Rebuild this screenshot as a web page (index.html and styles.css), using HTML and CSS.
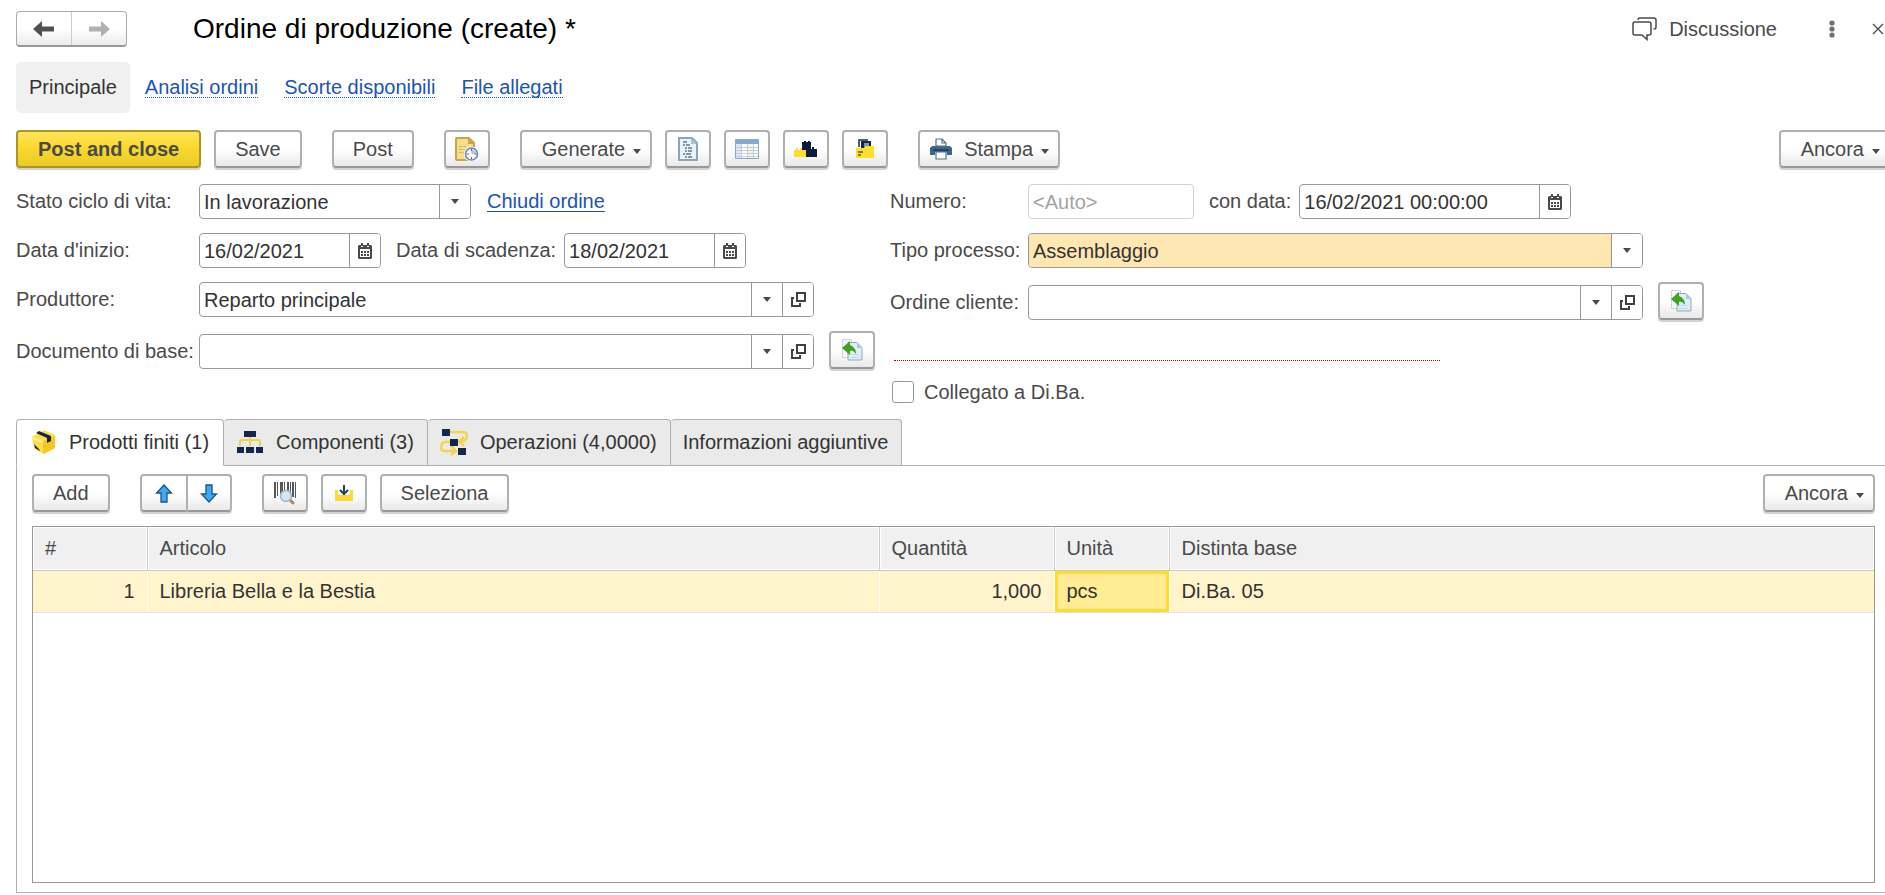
FILE: index.html
```html
<!DOCTYPE html>
<html lang="it">
<head>
<meta charset="utf-8">
<title>Ordine di produzione (create) *</title>
<link rel="stylesheet" href="styles.css">
</head>
<body>
<svg class="sprite" aria-hidden="true">
  <symbol id="calendar" viewBox="0 0 14 16"><path fill="#4a4a4a" fill-rule="evenodd" d="M1 2h2v2h2V2h4v2h2V2h2l1 1v12l-1 1H1l-1-1V3zM2 6v8h10V6z"/><path fill="#4a4a4a" d="M3 0h2v3H3zM9 0h2v3H9zM3 8h2v2H3zM6 8h2v2H6zM9 8h2v2H9zM3 11h2v2H3zM6 11h2v2H6zM9 11h2v2H9z"/></symbol>
  <symbol id="open" viewBox="0 0 15 15"><path fill="none" stroke="#404040" stroke-width="2" d="M6 1h8v8H6zM3 6H1v8h8v-3"/></symbol>
  <symbol id="caret" viewBox="0 0 8 5"><path fill="#4a4a4a" d="M0 0h8L4 5z"/></symbol>
  <symbol id="fill" viewBox="0 0 22 22"><path fill="#f5f7f8" stroke="#b9c3c9" stroke-dasharray="2 1" d="M1.500.5h9v18h-9z"/><path fill="#dfedf7" stroke="#8faabd" d="M7 3.500h9l5 5V21H7z"/><path fill="#a9cbe0" d="M16 3.500V9h5z"/><path fill="#c5dbea" d="M9 15h9v1H9zM9 18h9v1H9z"/><path fill="#41a31d" d="M1 9l8-7v4c4 2 6 4 6 9-2-3-4-4-6-3v4z"/></symbol>
</svg>
<div class="page">
  <header class="header">
    <div class="history">
      <button type="button" aria-label="Indietro"><svg width="22" height="16" viewBox="0 0 22 16"><path fill="#505050" d="M0 8l9-8v5.500h12v5H9V16z"/></svg></button>
      <button type="button" aria-label="Avanti"><svg width="22" height="16" viewBox="0 0 22 16"><path fill="#b0b0b0" d="M22 8l-9-8v5.500H1v5h12V16z"/></svg></button>
    </div>
    <h1>Ordine di produzione (create) *</h1>
    <button type="button" class="plain discuss"><svg width="25" height="24" viewBox="0 0 25 24"><g fill="none" stroke="#4a4a4a" stroke-width="1.500"><path d="M6 3V2.500Q6 1 7.500 1H22q2 0 2 2v7q0 2-2 2h-.5"/><path d="M3 5h14q2 0 2 2v9q0 2-2 2h-2v4.500L10 18H3q-2 0-2-2V7q0-2 2-2z"/></g></svg>Discussione</button>
    <button type="button" class="plain more" aria-label="Altro"><svg width="6" height="18" viewBox="0 0 6 18"><g fill="#707070"><circle cx="3" cy="3" r="2.600"/><circle cx="3" cy="9" r="2.600"/><circle cx="3" cy="15" r="2.600"/></g></svg></button>
    <button type="button" class="plain close" aria-label="Chiudi"><svg width="12" height="12" viewBox="0 0 12 12"><path fill="none" stroke="#4a4a4a" stroke-width="1.300" d="M1 1l10 10M11 1L1 11"/></svg></button>
  </header>

  <nav class="sections">
    <span class="current">Principale</span>
    <a href="#">Analisi ordini</a>
    <a href="#">Scorte disponibili</a>
    <a href="#">File allegati</a>
  </nav>

  <div class="toolbar">
    <div class="group">
      <button type="button" class="btn primary">Post and close</button>
      <button type="button" class="btn">Save</button>
    </div>
    <button type="button" class="btn">Post</button>
    <button type="button" class="btn icon" aria-label="Registro"><svg width="24" height="24" viewBox="0 0 24 24"><path fill="#f4df8c" stroke="#c9a44a" stroke-width="2" d="M1 2q0-1 1-1h12l5 5v17H2q-1 0-1-1z"/><path fill="#c9a44a" d="M13 1v6h6z"/><path stroke="#cdb463" stroke-dasharray="3 1" d="M4 9.500h8M4 12.500h6M4 15.500h5"/><circle cx="16.500" cy="17" r="7.500" fill="#fff"/><circle cx="16.500" cy="17" r="6" fill="#f1f6fb" stroke="#5b8bb8" stroke-width="1.600"/><path fill="#a9c8e6" d="M16.500 17v-4.500a4.500 4.500 0 0 1 4.500 4.500z"/><path fill="#d33" d="M16 12h1v2h-1zM16 20h1v2h-1zM12 16.500h2v1h-2zM19.500 16.500h2v1h-2z"/></svg></button>
    <div class="group">
      <button type="button" class="btn menu">Generate<svg class="caret"><use href="#caret"/></svg></button>
      <button type="button" class="btn icon" aria-label="Rapporto"><svg width="20" height="24" viewBox="0 0 20 24"><path fill="#edf4f9" stroke="#87a5bb" stroke-width="2" d="M1 1h13l5 5v17H1z"/><path fill="#a9c3d5" d="M13 1v6h6z"/><path stroke="#5d788e" stroke-width="1.500" d="M5 5h4M5 8h2M8 8h4M7 11h2M10 11h4M7 14h2M10 14h4M5 17h2M8 17h5M7 20h2M10 20h4"/></svg></button>
      <button type="button" class="btn icon" aria-label="Tabella"><svg width="24" height="20" viewBox="0 0 24 20"><path fill="#fff" stroke="#8ba6bf" d="M.5.5h23v19H.5z"/><path fill="#82a9d2" d="M1 1h22v4H1z"/><path fill="#e1e7ee" d="M1 5h5v14H1z"/><path fill="#fdf1e8" d="M12 5h6v14h-6z"/><path stroke="#c3cdd7" d="M1 8.500h22M1 11.500h22M1 14.500h22M1 17.500h22M6.500 5v14M12.500 5v14M18.500 5v14"/></svg></button>
      <button type="button" class="btn icon" aria-label="Componenti"><svg width="24" height="16" viewBox="0 0 24 16"><path fill="#0d1b3e" d="M8 1h2V0h2v1h2V0h2v1h1v7h1V6h2v2h3v8H12v-6H8z"/><path fill="#fbdc30" d="M0 9h2V7h2v2h2V7h2v2h4v7H0z"/></svg></button>
      <button type="button" class="btn icon" aria-label="Riserva"><svg width="20" height="20" viewBox="0 0 20 20"><path fill="none" stroke="#14264d" stroke-width="1.500" d="M4 8V1h9"/><path fill="#14264d" d="M6 2h10v8H6z"/><path fill="#8793a9" d="M9 4h5v5H9z"/><path fill="#fddf2d" d="M1 9h8l2-2h8v12H1z"/><path stroke="#5b5b37" stroke-width="1.500" d="M3 13h5M3 16h3"/></svg></button>
    </div>
    <button type="button" class="btn menu print"><svg width="22" height="22" viewBox="0 0 22 22"><path fill="#3c698b" d="M2 8h18l2 2v7h-5v-3H5v3H0v-7z"/><path fill="#244760" d="M3 11h16v2H3z"/><path fill="#fff" stroke="#53758e" stroke-width="1.200" d="M6 8V1h6l4 4v3zM12 1v4h4M6 14h10v7H6z"/></svg>Stampa<svg class="caret"><use href="#caret"/></svg></button>
    <button type="button" class="btn menu last">Ancora<svg class="caret"><use href="#caret"/></svg></button>
  </div>

  <form class="form">
    <div class="column">
      <div class="row">
        <label for="stato">Stato ciclo di vita:</label>
        <div class="field medium choice"><select id="stato"><option>In lavorazione</option></select><span class="addon"><svg class="caret"><use href="#caret"/></svg></span></div>
        <a class="action" href="#">Chiudi ordine</a>
      </div>
      <div class="row">
        <label for="inizio">Data d'inizio:</label>
        <div class="field short"><input id="inizio" type="text" value="16/02/2021"><button type="button" class="addon" aria-label="Calendario"><svg class="cal"><use href="#calendar"/></svg></button></div>
        <label class="inline" for="scadenza">Data di scadenza:</label>
        <div class="field short"><input id="scadenza" type="text" value="18/02/2021"><button type="button" class="addon" aria-label="Calendario"><svg class="cal"><use href="#calendar"/></svg></button></div>
      </div>
      <div class="row">
        <label for="produttore">Produttore:</label>
        <div class="field long"><input id="produttore" type="text" value="Reparto principale"><button type="button" class="addon" aria-label="Scegli"><svg class="caret"><use href="#caret"/></svg></button><button type="button" class="addon" aria-label="Apri"><svg class="open"><use href="#open"/></svg></button></div>
      </div>
      <div class="row">
        <label for="documento">Documento di base:</label>
        <div class="field long"><input id="documento" type="text"><button type="button" class="addon" aria-label="Scegli"><svg class="caret"><use href="#caret"/></svg></button><button type="button" class="addon" aria-label="Apri"><svg class="open"><use href="#open"/></svg></button></div>
        <button type="button" class="btn icon fill" aria-label="Compila da documento"><svg width="22" height="22"><use href="#fill"/></svg></button>
      </div>
    </div>
    <div class="column right">
      <div class="row">
        <label for="numero">Numero:</label>
        <div class="field number"><input id="numero" type="text" placeholder="&lt;Auto&gt;"></div>
        <label class="inline" for="data">con data:</label>
        <div class="field medium"><input id="data" type="text" value="16/02/2021 00:00:00"><button type="button" class="addon" aria-label="Calendario"><svg class="cal"><use href="#calendar"/></svg></button></div>
      </div>
      <div class="row">
        <label for="tipo">Tipo processo:</label>
        <div class="field long choice marked"><select id="tipo"><option>Assemblaggio</option></select><span class="addon"><svg class="caret"><use href="#caret"/></svg></span></div>
      </div>
      <div class="row">
        <label for="cliente">Ordine cliente:</label>
        <div class="field long"><input id="cliente" type="text"><button type="button" class="addon" aria-label="Scegli"><svg class="caret"><use href="#caret"/></svg></button><button type="button" class="addon" aria-label="Apri"><svg class="open"><use href="#open"/></svg></button></div>
        <button type="button" class="btn icon fill" aria-label="Compila da ordine"><svg width="22" height="22"><use href="#fill"/></svg></button>
      </div>
      <div class="required"></div>
      <div class="check"><input id="diba" type="checkbox"><label for="diba">Collegato a Di.Ba.</label></div>
    </div>
  </form>

  <div class="tabs" role="tablist">
    <button type="button" role="tab" class="tab active" aria-selected="true"><svg width="26" height="26" viewBox="0 0 26 26"><path fill="#fde047" d="M1 8L13 1l11 5v13l-11 6L3 20z"/><path fill="#f4c81f" d="M12 12l12-5v12l-12 6z"/><path fill="#fff3a3" d="M1 8l11 4-1 2L1 10z"/><path fill="#13264b" d="M5 4l3-2 12 5v5l-4 2V9zM3 15l5 5 1 2-5-3z"/></svg>Prodotti finiti (1)</button>
    <button type="button" role="tab" class="tab"><svg width="28" height="24" viewBox="0 0 28 24"><path fill="none" stroke="#f3cf43" stroke-width="2" d="M14 6v10M4 16v-4q0-2 2-2h16q2 0 2 2v4"/><path fill="#13264b" d="M8 1h12v6H8zM1 17h7v6H1zM10 17h8v6h-8zM20 17h7v6h-7z"/></svg>Componenti (3)</button>
    <button type="button" role="tab" class="tab"><svg width="28" height="28" viewBox="0 0 28 28"><path fill="none" stroke="#f6d34a" stroke-width="2.500" d="M9 4h14q4 0 4 4 0 5-6 6M10 14H5q-4 1-4 5t4 4h10M24 9l-5 5 5 4M11 18l5 5-5 4"/><path fill="#13264b" d="M2 1h8v7H2zM10 11h8v7h-8zM18 20h8v7h-8z"/></svg>Operazioni (4,0000)</button>
    <button type="button" role="tab" class="tab">Informazioni aggiuntive</button>
  </div>

  <section class="panel">
    <div class="toolbar">
      <button type="button" class="btn">Add</button>
      <div class="pair">
        <button type="button" class="btn icon" aria-label="Sposta su"><svg width="18" height="19" viewBox="0 0 18 19"><path fill="#3ea9f0" stroke="#15568e" stroke-width="1.300" d="M9 1l7.500 8H12v9H6V9H1.500z"/></svg></button>
        <button type="button" class="btn icon" aria-label="Sposta giù"><svg width="18" height="19" viewBox="0 0 18 19"><path fill="#3ea9f0" stroke="#15568e" stroke-width="1.300" d="M9 18l7.500-8H12V1H6v9H1.500z"/></svg></button>
      </div>
      <div class="group">
        <button type="button" class="btn icon" aria-label="Cerca codice a barre"><svg width="22" height="24" viewBox="0 0 22 24"><path fill="#555" d="M0 1h2v16H0zM3 1h1v14H3zM6 1h3v14H6zM10 1h1v10h-1zM13 1h2v10h-2zM16 1h1v14h-1zM18 1h2v15h-2zM21 1h1v16h-1z"/><path stroke="#b98155" stroke-width="3" stroke-linecap="round" d="M16 19l3 3"/><circle cx="12" cy="15" r="5.500" fill="#cfe7f8" stroke="#a2b8c9" stroke-width="1.500"/></svg></button>
        <button type="button" class="btn icon" aria-label="Carica"><svg width="18" height="16" viewBox="0 0 18 16"><path fill="#fbd936" d="M0 5h3v5h12V5h3v11H0z"/><path fill="none" stroke="#27405e" stroke-width="2" d="M9 0v8M5 5l4 4 4-4"/></svg></button>
        <button type="button" class="btn">Seleziona</button>
      </div>
      <button type="button" class="btn menu last">Ancora<svg class="caret"><use href="#caret"/></svg></button>
    </div>
    <div class="grid">
      <table>
        <colgroup><col class="c-index"><col class="c-item"><col class="c-qty"><col class="c-unit"><col></colgroup>
        <thead><tr><th>#</th><th>Articolo</th><th>Quantità</th><th>Unità</th><th>Distinta base</th></tr></thead>
        <tbody><tr><td class="num">1</td><td>Libreria Bella e la Bestia</td><td class="num">1,000</td><td class="selected">pcs</td><td>Di.Ba. 05</td></tr></tbody>
      </table>
    </div>
  </section>
</div>
</body>
</html>
```

FILE: styles.css
```css
* { box-sizing: border-box; }

body {
  margin: 0;
  overflow: hidden;
  background: #fff;
  color: #4a4a4a;
  font: 20px/24px "Liberation Sans", Arial, sans-serif;
}

button, input, select { font: inherit; color: inherit; margin: 0; }
a { color: #1a54b4; }
svg { flex: none; display: block; }
.sprite { display: none; }
.caret { width: 8px; height: 5px; }
.cal { width: 14px; height: 16px; }
.open { width: 15px; height: 15px; }

/* The window content runs slightly past the right edge. */
.page {
  display: flex;
  flex-direction: column;
  min-height: 100vh;
  margin-right: -6px;
  padding: 11px 0 2px 16px;
}

.header { display: flex; align-items: center; height: 36px; padding-right: 7px; }
.history {
  display: flex;
  width: 111px;
  height: 36px;
  border: 1px solid #aaa;
  border-bottom: 2px solid #999;
  border-radius: 4px;
  background: linear-gradient(#fff 50%, #ececec);
}
.history button {
  display: flex;
  flex: 1;
  align-items: center;
  justify-content: center;
  padding: 0;
  border: 0;
  background: none;
}
.history button + button { border-left: 1px solid #ccc; }
.header h1 { flex: 1; margin: 0 0 0 66px; color: #000; font-size: 28px; font-weight: 400; line-height: 36px; }
.plain { display: flex; align-items: center; padding: 0; border: 0; background: none; }
.discuss { gap: 12px; }
.more { margin-left: 52px; }
.close { margin-left: 37px; }

.sections { display: flex; align-items: center; gap: 26px; height: 51px; margin-top: 15px; }
.sections a { border-bottom: 1px dotted #1a54b4; line-height: 20px; text-decoration: none; }
.sections .current {
  margin-right: -11px;
  padding: 0 13px;
  border-radius: 5px;
  background: #f0f0f0;
  color: #333;
  line-height: 51px;
}

.toolbar { display: flex; align-items: center; gap: 30px; }
.sections + .toolbar { margin-top: 17px; }
.group { display: flex; gap: 13px; }
.btn {
  display: flex;
  align-items: center;
  justify-content: center;
  height: 38px;
  padding: 0 19px;
  border: 2px solid #b0b0b0;
  border-bottom-color: #989898;
  border-radius: 4px;
  background: linear-gradient(#fff 50%, #e9e9e9);
  box-shadow: 0 2px 0 #d2d2d2;
  white-space: nowrap;
}
.btn.primary {
  padding: 0 20px;
  border-color: #ab9527;
  background: linear-gradient(#ffe55c, #fbd92c 45%, #e9cb28);
  font-weight: 700;
}
.btn.icon { width: 46px; padding: 0; }
.btn.menu { gap: 8px; padding: 0 9px 0 20px; }
.btn.print { gap: 12px; padding-left: 10px; }
.menu .caret { margin-top: 4px; }
.btn.print .caret { margin-left: -4px; }
.last { margin-left: auto; }
.pair { display: flex; }
.pair .btn:first-child { width: 48px; border-radius: 4px 0 0 4px; }
.pair .btn:last-child { width: 44px; border-left: 0; border-radius: 0 4px 4px 0; }

.form { display: flex; gap: 15px; margin-top: 16px; }
.column { display: flex; flex-direction: column; gap: 14px; min-width: 859px; }
.row { display: flex; align-items: flex-end; line-height: 35px; }
.row > label { width: 183px; white-space: nowrap; }
.right .row > label { width: 138px; }
.row > label.inline, .right .row > label.inline { width: auto; margin: 0 8px 0 15px; }
.action { margin-left: 16px; text-decoration-thickness: 1px; text-underline-offset: 3px; }
.field {
  display: flex;
  height: 35px;
  border: 1px solid #999;
  border-radius: 4px;
  background: #fff;
  color: #333;
  line-height: 24px;
  overflow: hidden;
}
.field input, .field select {
  flex: 1;
  min-width: 0;
  padding: 0 4px;
  border: 0;
  outline: 0;
  background: none;
  appearance: none;
}
.field.number { width: 166px; border-color: #d2d2d2; }
.field ::placeholder { color: #a3a3a3; opacity: 1; }
.short { width: 182px; }
.medium { width: 272px; }
.long { width: 615px; }
.field.marked select { background: #ffe7b3; }
.addon {
  display: flex;
  flex: none;
  align-items: center;
  justify-content: center;
  width: 31px;
  padding: 0;
  border: 0;
  border-left: 1px solid #999;
  background: #fff;
}
.fill { margin-left: 15px; }
.required { width: 546px; height: 27px; margin-left: 4px; border-bottom: 1px dotted #c00000; }
.check { display: flex; align-items: center; gap: 10px; height: 22px; margin: 6px 0 0 2px; }
.check input {
  width: 22px;
  height: 22px;
  border: 1px solid #999;
  border-radius: 3px;
  appearance: none;
}

.tabs { position: relative; z-index: 1; display: flex; height: 47px; margin-top: 16px; }
.tab {
  display: flex;
  align-items: center;
  gap: 12px;
  padding: 0 13px 2px 12px;
  border: 1px solid #b0b0b0;
  border-left-width: 0;
  border-radius: 4px 4px 0 0;
  background: #eaeaea;
  color: #333;
  white-space: nowrap;
}
.tab.active { padding: 0 14px 2px; border-left-width: 1px; border-bottom-color: #fff; background: #fff; }

.panel {
  display: flex;
  flex: 1;
  flex-direction: column;
  margin-top: -1px;
  padding: 8px 15px 9px;
  border: 1px solid #b0b0b0;
}
.grid { flex: 1; margin-top: 14px; border: 1px solid #999; }
table { width: 100%; border-collapse: collapse; table-layout: fixed; }
.c-index { width: 114px; }
.c-item { width: 732px; }
.c-qty { width: 175px; }
.c-unit { width: 115px; }
th, td { padding: 0 12px; text-align: left; font-weight: 400; }
th {
  height: 43px;
  border-bottom: 1px solid #c8c8c8;
  background: #f0f0f0;
  box-shadow: inset 0 0 0 1px #fff;
}
th + th { border-left: 1px solid #c8c8c8; }
td { height: 42px; border-bottom: 1px solid #e2e2e2; background: #fff4cc; color: #333; }
td + td { border-left: 1px solid #fff; }
.num { text-align: right; }
td.selected { background: #ffec94; box-shadow: inset 0 0 0 3px #ffdb2b; }
```
